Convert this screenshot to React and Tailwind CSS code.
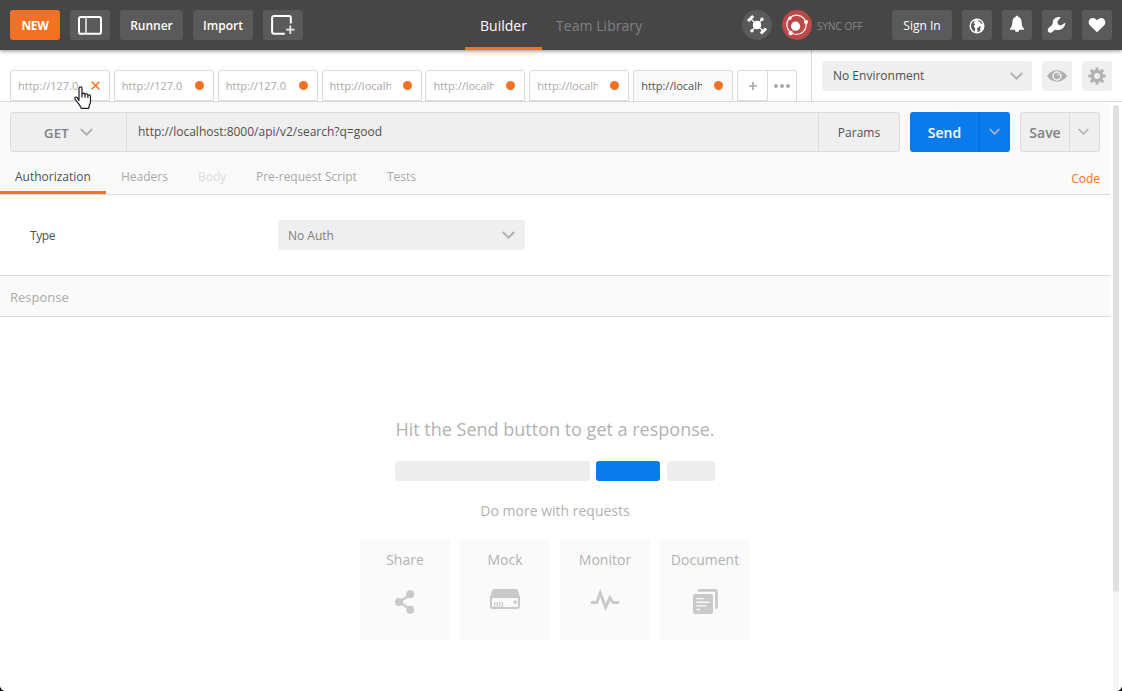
import React from 'react';

const Chevron = ({ className = '', w = 13, h = 8, sw = 1.9 }) => (
  <svg width={w} height={h} viewBox="0 0 13 8" className={'shrink-0 ' + className} fill="none" stroke="currentColor" strokeWidth={sw}>
    <path d="M0.8 1l5.7 5.7L12.2 1" />
  </svg>
);

const HeaderButton = ({ className = '', children }) => (
  <div className={'flex h-[30px] shrink-0 items-center justify-center rounded-[3px] bg-[#5a5a5a] text-white ' + className}>{children}</div>
);

const Header = () => (
  <header className="relative z-10 flex h-[50px] shrink-0 items-center bg-[#464646] shadow-[0_1px_4px_rgba(0,0,0,0.45)]">
    <div className="flex w-[465px] gap-[10px] pl-[10px] text-[12px] font-semibold">
      <div className="flex h-[30px] w-[50px] items-center justify-center rounded-[3px] bg-[#f47023] pt-[2px] font-bold tracking-[-0.3px] text-white">NEW</div>
      <HeaderButton className="w-[40px]">
        <svg width="26" height="20" viewBox="0 0 26 20" fill="none" stroke="#fff">
          <rect x="2" y="1.9" width="22" height="16.8" rx="1.8" strokeWidth="2" />
          <path d="M9 2v16" strokeWidth="1.8" stroke="#d8d8d8" />
        </svg>
      </HeaderButton>
      <HeaderButton className="w-[63px] pt-[2px]">Runner</HeaderButton>
      <HeaderButton className="w-[60px] pt-[2px]">Import</HeaderButton>
      <HeaderButton className="w-[40px]">
        <svg width="26" height="22" viewBox="0 0 26 22" fill="none" stroke="#fff">
          <path d="M14.8 19.7H4.1a2 2 0 0 1-2-2V3.900a2 2 0 0 1 2-2h15.200a1.500 1.500 0 0 1 1.500 1.500v6.200" strokeWidth="2" />
          <path d="M20.300 11.500v8.400M16.100 15.700h8.400" strokeWidth="1.800" stroke="#e8e8e8" />
        </svg>
      </HeaderButton>
    </div>
    <div className="flex h-[50px] w-[77px] items-center justify-center border-b-[3px] border-[#f47023] pt-[4px] text-[14px] text-white">Builder</div>
    <div className="w-[200px] pl-[14px] pt-px text-[14px] tracking-[0.050px] text-[#808080]">Team Library</div>
    <div className="flex h-[30px] w-[30px] items-center justify-center rounded-full bg-[#5a5a5a]">
      <svg width="22" height="22" viewBox="0 0 22 22" stroke="#fff" fill="#fff">
        <circle cx="11" cy="11" r="4.200" stroke="none" />
        <path d="M5 5l12 12M16 5.500L6 16.500" strokeWidth="1.200" />
        <path d="M2 7l5.200-5M14.800 19.500l5.200-5" strokeWidth="3" />
        <circle cx="16" cy="5.300" r="1.700" stroke="none" />
        <circle cx="6" cy="16.700" r="1.700" stroke="none" />
      </svg>
    </div>
    <div className="ml-[10px] flex h-[30px] w-[30px] items-center justify-center rounded-full bg-[#bd4848]">
      <svg width="24" height="24" viewBox="0 0 24 24" fill="#fff">
        <circle cx="11.500" cy="11.800" r="9.700" fill="none" stroke="#fff" strokeWidth="1.200" />
        <circle cx="10.600" cy="13.200" r="4.600" />
        <circle cx="21" cy="9" r="2.100" />
        <circle cx="5" cy="5.200" r="1.600" />
        <circle cx="5.700" cy="20" r="2.200" />
      </svg>
    </div>
    <div className="ml-[5px] w-[75px] pt-[2px] text-[10px] text-[#878787]">SYNC OFF</div>
    <div className="flex gap-[10px]">
      <HeaderButton className="w-[60px] pt-[2px] text-[12px]">Sign In</HeaderButton>
      <HeaderButton className="w-[30px]">
        <svg width="16" height="16" viewBox="0 0 16 16" className="-ml-px mt-px">
          <circle cx="8" cy="8" r="7.500" fill="#fff" />
          <path d="M5.800 2.300L4.500 5.300l1.700.7L4.700 8.500l1.500 1.600-.3 3.600C3.500 12.800 2 10.700 2 8c0-2.700 1.500-4.800 3.800-5.700zM9.500 1.900c2 .5 3.500 1.900 4.100 3.700l-1.700.2-.7-2-1.900-.5zM7.700 10.200l1.800-.4 1-1.700 1.300.9-.8 2.200.7 1.200c-1 .9-2.200 1.400-3.600 1.500l.5-2z" fill="#5a5a5a" />
        </svg>
      </HeaderButton>
      <HeaderButton className="w-[30px]">
        <svg width="16" height="18" viewBox="0 0 16 18" fill="#fff" className="mt-[-2px]">
          <path d="M8 .7c1 0 1.500.6 1.500 1.400 2.200.7 2.900 2.500 3.100 4.900.2 3.200.5 4.700 2.400 6.700v1H10.200a2.200 2.200 0 0 1-4.400 0H1v-1c1.900-2 2.200-3.500 2.400-6.700.2-2.400.9-4.200 3.100-4.900C6.500 1.300 7 .7 8 .7z" />
        </svg>
      </HeaderButton>
      <HeaderButton className="w-[30px]">
        <svg width="20" height="18" viewBox="0 0 20 18" fill="#fff">
          <path d="M13.700 1.200C10 .2 5.800 2.500 5.700 6.600c0 1.500-.2 2.100-1.200 3L1.700 12c-1.300 1.200-1.200 2.900-.1 3.900 1.200 1.200 2.800 1.200 4-.1l1.100-1.200c.9-.9 1.700-.9 3-.7 4.600.8 8.400-2.200 8.700-7.300l-4 2.700c-2.500.3-4.300-1.500-3.900-3.900z" />
        </svg>
      </HeaderButton>
      <HeaderButton className="w-[30px]">
        <svg width="18" height="16" viewBox="0 0 18 16" fill="#fff">
          <path d="M9 15.200L2.200 8.700C.8 7.300.7 6.300.7 5.200.7 2.900 2.400 1.100 4.700 1.100c1.900 0 3.400 1 4.300 2.500.9-1.500 2.400-2.500 4.300-2.500 2.300 0 4 1.800 4 4.100 0 1.100-.1 2.100-1.500 3.500z" />
        </svg>
      </HeaderButton>
    </div>
  </header>
);

const tabs = ['http://127.0.0.1', 'http://127.0.0.1', 'http://127.0.0.1', 'http://localhost', 'http://localhost', 'http://localhost', 'http://localhost'];

const Pointer = () => (
  <svg width="18" height="24" viewBox="0 0 18 24" className="absolute left-[74px] top-[86px] z-20" fill="#fff" stroke="#1c1c28" strokeWidth="1.200" strokeLinejoin="round">
    <path d="M5 14.500V2.500C5 .3 8 .3 8 2.500V8c.5-1.300 2.800-1.100 3 .5.700-1.100 2.700-.8 2.900.8.800-.9 2.600-.5 2.600 1.200v5.200c0 1.500-.7 2.200-1.200 3.500L14.700 22.300H7.200c-.5-2.200-1.800-3.600-2.900-5L1.200 13.300c-1.100-1.600.6-2.900 1.800-1.900z" />
    <path d="M8 7.500v4M11 8.500v3.200M13.900 9.500v2.400" fill="none" />
  </svg>
);

const TabBar = () => (
  <div className="flex h-[52px] shrink-0 border-b border-[#dbdbdb] bg-white">
    <div className="flex w-[811px] pl-[10px] pt-[20px]">
      <div className="flex gap-[3.860px]">
        {tabs.map((t, i) => (
          <div
            key={i}
            className={
              'flex h-[31px] w-[100px] items-center rounded-t-[3px] border border-[#dbdbdb] pl-[7px] text-[11px] ' +
              (i === 6 ? 'border-b-[#fafafa] bg-[#fafafa] text-[#505050]' : 'bg-white text-[#a9a9a9]')
            }
          >
            <span className="w-[61px] overflow-hidden whitespace-nowrap pt-[2px]">{t}</span>
            {i === 0 ? (
              <svg width="9" height="9" viewBox="0 0 9 9" className="ml-[12px]" stroke="#f47023" strokeWidth="1.600"><path d="M.7.7l7.600 7.600M8.300.7L.7 8.300" /></svg>
            ) : (
              <span className="ml-[12px] h-[9px] w-[9px] rounded-full bg-[#f47023]" />
            )}
          </div>
        ))}
      </div>
      <div className="ml-[4px] flex h-[31px] w-[60px] rounded-t-[3px] border border-b-0 border-[#dbdbdb] text-[#a9a9a9]">
        <div className="flex w-[30px] items-center justify-center border-b border-r border-[#dbdbdb] pl-px pt-px">
          <svg width="8" height="8" viewBox="0 0 8 8" stroke="currentColor" strokeWidth="1.700"><path d="M4 0v8M0 4h8" /></svg>
        </div>
        <div className="flex flex-1 items-center justify-center">
          <svg width="16" height="4" viewBox="0 0 16 4" fill="currentColor"><circle cx="2" cy="2" r="2" /><circle cx="8" cy="2" r="2" /><circle cx="14" cy="2" r="2" /></svg>
        </div>
      </div>
    </div>
    <div className="flex flex-1 gap-[10px] border-l border-[#dbdbdb] pl-[10px] pt-[11px] text-[#b0b0b0]">
      <div className="flex h-[30px] w-[210px] items-center justify-between rounded-[3px] bg-[#efefef] pl-[11px] pr-[9px] text-[12px] text-[#505050]">
        No Environment
        <Chevron className="text-[#b0b0b0]" />
      </div>
      <div className="flex h-[30px] w-[30px] items-center justify-center rounded-[3px] bg-[#efefef]">
        <svg width="20" height="12" viewBox="0 0 20 12">
          <path d="M0 6C4.500-1.600 15.500-1.600 20 6 15.500 13.600 4.500 13.600 0 6z" fill="currentColor" />
          <circle cx="10" cy="6" r="3.900" fill="none" stroke="#efefef" strokeWidth="1.500" />
          <path d="M10 4.200a1.800 1.800 0 0 1 1.800 1.800" fill="none" stroke="#efefef" strokeWidth="1" />
        </svg>
      </div>
      <div className="flex h-[30px] w-[30px] items-center justify-center rounded-[3px] bg-[#efefef]">
        <svg width="18" height="18" viewBox="0 0 18 18" stroke="currentColor" fill="none">
          <circle cx="9" cy="9" r="4.600" strokeWidth="3.200" />
          <path d="M9 .4v3M9 14.600v3M.4 9h3M14.600 9h3M2.900 2.900l2.200 2.200M12.900 12.900l2.200 2.200M2.900 15.100l2.200-2.200M12.900 5.100l2.200-2.200" strokeWidth="2.900" />
        </svg>
      </div>
    </div>
  </div>
);

const RequestBar = () => (
  <div className="flex h-[50px] gap-[10px] pl-[10px] pt-[10px]">
    <div className="flex h-[40px] w-[890px] rounded-[3px] border border-[#dbdbdb] bg-[#efefef] text-[#505050]">
      <div className="flex w-[116px] items-center border-r border-[#dbdbdb] pl-[33px] text-[13px] font-semibold text-[#808080]">
        <span className="w-[36px] pt-[3px] tracking-[0.300px]">GET</span>
        <Chevron className="text-[#b0b0b0]" />
      </div>
      <div className="flex flex-1 items-center pl-[11px] text-[12px]">http://localhost:8000/api/v2/search?q=good</div>
      <div className="flex w-[81px] items-center justify-center border-l border-[#dbdbdb] pt-[2px] text-[12px]">Params</div>
    </div>
    <div className="flex h-[40px] w-[100px] rounded-[3px] bg-[#097bed] text-white">
      <div className="flex w-[70px] items-center justify-center border-r border-[#086ed6] pt-px text-[14px] font-semibold">Send</div>
      <div className="flex flex-1 items-center justify-center pb-px pr-[2px]"><Chevron w={11} h={7} className="text-[#b0b8c0]" /></div>
    </div>
    <div className="flex h-[40px] w-[80px] rounded-[3px] border border-[#dbdbdb] bg-[#efefef] text-[#808080]">
      <div className="flex w-[49px] items-center justify-center border-r border-[#dbdbdb] pt-px text-[14px] font-semibold">Save</div>
      <div className="flex flex-1 items-center justify-center pb-px pr-[2px]"><Chevron w={11} h={7} className="text-[#b0b0b0]" /></div>
    </div>
  </div>
);

const SubTabs = () => (
  <div className="flex h-[43px] w-[1110px] border-b border-[#dbdbdb] text-[12px] leading-[16px] text-[#a9a9a9]">
    <div className="w-[106px] border-b-[3px] border-[#f47023] pl-[15px] pt-[17px] text-[#505050]">Authorization</div>
    <div className="w-[77px] pl-[15px] pt-[17px]">Headers</div>
    <div className="w-[58px] pl-[15px] pt-[17px] text-[#dcdcdc]">Body</div>
    <div className="w-[131px] pl-[15px] pt-[17px]">Pre-request Script</div>
    <div className="flex-1 pl-[15px] pt-[17px]">Tests</div>
    <div className="pr-[10px] pt-[19px] text-[#f47023]">Code</div>
  </div>
);

const Card = ({ label, children }) => (
  <div className="flex h-[100px] w-[90px] flex-col items-center bg-[#fafafa] pt-[10px]">
    <div className="h-[20px] text-[14px] leading-[20px]">{label}</div>
    <div className="flex h-[62px] items-center justify-center text-[#c9c9c9]">{children}</div>
  </div>
);

const EmptyState = () => (
  <div className="flex w-[1110px] flex-1 flex-col items-center bg-white pt-[99px] text-[#b2b2b2]">
    <div className="h-[45px] text-[18px] leading-[26px]">Hit the Send button to get a response.</div>
    <div className="flex h-[20px] w-[320px]">
      <div className="w-[195px] rounded-[3px] bg-[#ededed]" />
      <div className="ml-[6px] w-[64px] rounded-[3px] bg-[#097bed]" />
      <div className="ml-[7px] w-[48px] rounded-[3px] bg-[#ededed]" />
    </div>
    <div className="mt-[20px] h-[39px] text-[14px] leading-[20px]">Do more with requests</div>
    <div className="flex gap-[10px]">
      <Card label="Share">
        <svg width="20" height="24" viewBox="0 0 20 24" fill="currentColor" className="mt-[2px]">
          <path d="M15.500 4L4.500 12l11 8" fill="none" stroke="currentColor" strokeWidth="2.300" />
          <circle cx="15.200" cy="4.300" r="4" /><circle cx="4" cy="12" r="4" /><circle cx="15.200" cy="19.700" r="4" />
        </svg>
      </Card>
      <Card label="Mock">
        <svg width="30" height="20" viewBox="0 0 30 20" className="mb-[4px]">
          <path d="M4.500 0h21c1.500 0 2 .5 2.500 2l2 6v9a3 3 0 0 1-3 3H3a3 3 0 0 1-3-3V8l2-6C2.500.5 3 0 4.500 0z" fill="currentColor" />
          <rect x="2" y="9" width="26" height="9" rx="1" fill="#fafafa" />
          <path d="M4.700 13v5M7.200 13v5M9.700 13v5M12.200 13v5" stroke="currentColor" strokeWidth="1.200" />
          <circle cx="25.200" cy="13.300" r="1.700" fill="currentColor" />
        </svg>
      </Card>
      <Card label="Monitor">
        <svg width="30" height="22" viewBox="0 0 30 22" className="mb-[3px]" fill="none" stroke="currentColor" strokeWidth="2.900" strokeLinecap="round">
          <path d="M2 13.500h4.800L10.200 4l5.400 14.200 4.300-9.400 3 4.700H28.200" />
        </svg>
      </Card>
      <Card label="Document">
        <svg width="25" height="25" viewBox="0 0 25 25" fill="currentColor">
          <rect x="0" y="5" width="20" height="20" rx="2" />
          <path d="M6 1.300h15.500a2 2 0 0 1 2 2v15.200" fill="none" stroke="currentColor" strokeWidth="2.800" strokeLinecap="round" />
          <path d="M3.300 9.600h7.500M3.300 13.200h13.200M3.300 16.900h10M3.300 20.500h4" stroke="#fafafa" strokeWidth="1.400" />
        </svg>
      </Card>
    </div>
  </div>
);

export default function App() {
  return (
    <div className="h-[691px] w-[1122px] overflow-hidden bg-[#111]">
      <div className="relative flex h-[691px] w-[1122px] flex-col overflow-hidden rounded-b-[6px] bg-white font-['Open_Sans',sans-serif]">
        <Header />
        <TabBar />
        <div className="flex min-h-0 flex-1">
          <div className="flex w-[1110px] flex-col">
            <div className="h-[93px] shrink-0 bg-[#fafafa]">
              <RequestBar />
              <SubTabs />
            </div>
            <div className="flex h-[80px] shrink-0 items-center bg-white pl-[30px] text-[12px] text-[#505050]">
              <div className="w-[248px] pt-[2px] tracking-[-0.400px]">Type</div>
              <div className="flex h-[30px] w-[247px] items-center justify-between rounded-[3px] bg-[#efefef] pl-[10px] pr-[10px] text-[#808080]">
                <span className="pt-px">No Auth</span>
                <Chevron className="text-[#b0b0b0]" />
              </div>
            </div>
            <div className="flex h-[42px] shrink-0 items-center border-y border-[#dbdbdb] bg-[#fafafa] pl-[10px] pt-[3px] text-[13px] text-[#a9a9a9]">Response</div>
            <EmptyState />
          </div>
          <div className="w-[12px] bg-white pl-[3px] pt-[3px]">
            <div className="h-[584px] w-[6px] rounded-[3px] bg-[#f6f6f6]">
              <div className="h-[487px] w-[6px] rounded-[3px] bg-[#e0e0e0]" />
            </div>
          </div>
        </div>
        <Pointer />
      </div>
    </div>
  );
}
